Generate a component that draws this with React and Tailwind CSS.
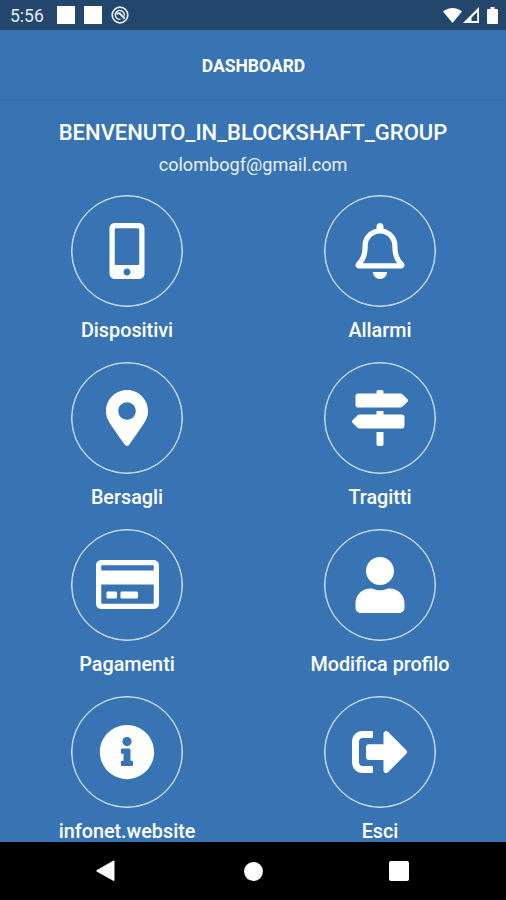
import {
  FaMobileAlt,
  FaRegBell,
  FaMapMarkerAlt,
  FaMapSigns,
  FaRegCreditCard,
  FaUser,
  FaInfoCircle,
  FaSignOutAlt,
} from 'react-icons/fa';

const menu = [
  { label: 'Dispositivi', Icon: FaMobileAlt },
  { label: 'Allarmi', Icon: FaRegBell },
  { label: 'Bersagli', Icon: FaMapMarkerAlt },
  { label: 'Tragitti', Icon: FaMapSigns },
  { label: 'Pagamenti', Icon: FaRegCreditCard, size: 'size-[63px]' },
  { label: 'Modifica profilo', Icon: FaUser },
  { label: 'infonet.website', Icon: FaInfoCircle },
  { label: 'Esci', Icon: FaSignOutAlt },
];

const StatusBar = () => (
  <div className="h-[30px] shrink-0 bg-[#23466d] flex items-center pl-[10px] pr-[8px]">
    <span className="text-[17.5px] leading-[30px] text-[#e6ecf3] w-[47px] pt-[2px]">5:56</span>
    <div className="flex items-center gap-[9px]">
      <span className="w-[18px] h-[18px] bg-white" />
      <span className="w-[18px] h-[18px] bg-white" />
      <svg className="w-[18px] h-[18px]" viewBox="0 0 18 18" fill="none" stroke="#e6ecf3">
        <circle cx="9" cy="9" r="7.8" strokeWidth="1.7" />
        <path d="M13 10.500A4.500 4.500 0 1 0 9.500 13.300" strokeWidth="1.4" />
        <path d="M5.500 8.300c1.500-1.300 3.300-1.200 4.200 0l4 4.500" strokeWidth="2" />
      </svg>
    </div>
    <div className="ml-auto flex items-center">
      <svg className="w-[19px] h-[16px]" viewBox="0 0 19 16" fill="#fff">
        <path d="M0 4.500C5.300 -.3 13.700 -.3 19 4.500L9.500 16z" />
      </svg>
      <svg className="w-[16px] h-[16px] ml-[1px]" viewBox="0 0 16 16">
        <path fillRule="evenodd" d="M0 16L16 0V16zM8.500 14H14.200V5L8.500 10.500z" fill="#fff" />
      </svg>
      <svg className="w-[11px] h-[17px] ml-[8px]" viewBox="0 0 11 17" fill="#fff">
        <path d="M3.500 0h4v2H10a1 1 0 0 1 1 1v13a1 1 0 0 1-1 1H1a1 1 0 0 1-1-1V3a1 1 0 0 1 1-1h2.500z" />
      </svg>
    </div>
  </div>
);

const MenuItem = ({ label, Icon, size = 'size-[56px]' }) => (
  <button className="flex flex-col items-center h-[167px]">
    <span className="w-[112px] h-[112px] shrink-0 rounded-full border border-[#dce8f4] shadow-[inset_0_0_0_0.5px_#c3d6ea] flex items-center justify-center pl-px pb-px">
      <Icon className={size} />
    </span>
    <span className="mt-[12px] pl-px text-[19.8px] leading-6 font-medium whitespace-nowrap">{label}</span>
  </button>
);

const NavBar = () => (
  <div className="h-[58px] shrink-0 bg-black flex items-center">
    <div className="w-[242px] pl-[96px]">
      <svg className="w-[19px] h-[22px]" viewBox="0 0 19 22" fill="#fff">
        <path d="M.6 10.200L17.200 .8Q18.500 .2 18.500 1.500V20Q18.500 21.500 17.200 20.800L.6 11.400Q0 10.800 .6 10.200z" />
      </svg>
    </div>
    <span className="w-[19px] h-[19px] ml-[2px] rounded-full bg-white" />
    <span className="w-[20px] h-[20px] ml-[126px] rounded-[2px] bg-white" />
  </div>
);

const App = () => {
  return (
    <div className="w-[506px] h-[900px] flex flex-col overflow-hidden bg-[#3874b4] text-white font-['Roboto',sans-serif]">
      <StatusBar />
      <header className="h-[71px] shrink-0 border-b-2 border-[#336ca9] flex items-center justify-center pt-[3px] pl-px">
        <h1 className="text-[17.5px] font-bold">DASHBOARD</h1>
      </header>

      <main className="flex-1 min-h-0 overflow-hidden">
        <div className="text-center pt-[18px]">
          <h2 className="text-[22px] leading-7 font-medium">BENVENUTO_IN_BLOCKSHAFT_GROUP</h2>
          <p className="text-[18.1px] leading-6 mt-[6px] text-[#e9f0f8]">colombogf@gmail.com</p>
        </div>
        <div className="grid grid-cols-2 mt-[18px]">
          {menu.map((item) => (
            <MenuItem key={item.label} {...item} />
          ))}
        </div>
      </main>

      <NavBar />
    </div>
  );
};

export default App;
